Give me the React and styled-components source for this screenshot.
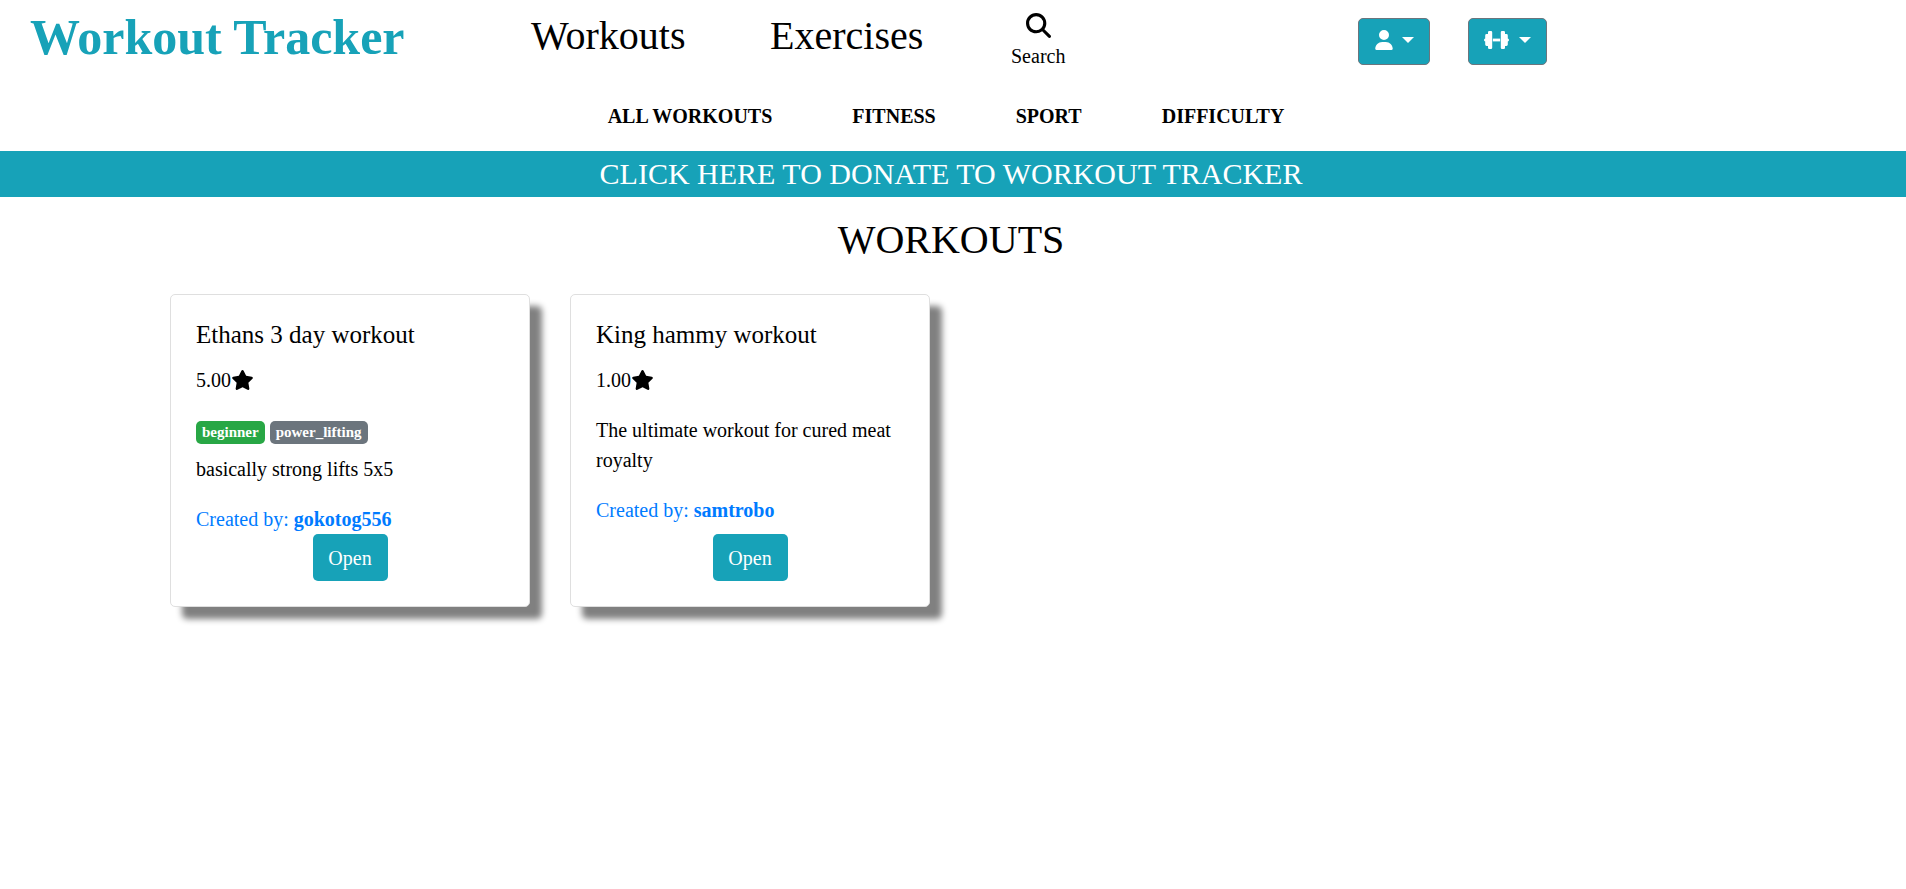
import React from "react";
import styled, { createGlobalStyle } from "styled-components";
import { FaMagnifyingGlass, FaUser, FaStar } from "react-icons/fa6";

const GlobalStyle = createGlobalStyle`
  *, *::before, *::after { box-sizing: border-box; }
  body {
    margin: 0;
    background: #fff;
    color: #000;
    font-family: "Liberation Serif", "Times New Roman", serif;
    font-size: 20px;
    line-height: 30px;
  }
  h1, h2, p { margin: 0; font-weight: 400; }
  a { color: inherit; text-decoration: none; }
  button { font: inherit; cursor: pointer; }
`;

const TopBar = styled.header`
  display: grid;
  grid-template-columns: 501fr 239fr 241fr 347fr 548fr;
  align-items: start;
  padding: 6px 0 0 30px;
`;

const Brand = styled.a`
  color: #17a2b8;
  font-size: 50px;
  font-weight: 700;
  line-height: 62px;
  white-space: nowrap;
`;

const MainLink = styled.a`
  font-size: 40px;
  line-height: 60px;
`;

const SearchLink = styled.a`
  display: flex;
  flex-direction: column;
  align-items: center;
  gap: 3px;
  justify-self: start;
  padding-top: 7px;

  svg { width: 25px; height: 25px; }
`;

const Actions = styled.div`
  display: flex;
  gap: 38px;
  padding-top: 12px;
`;

const DropdownButton = styled.button`
  display: flex;
  align-items: center;
  gap: ${({ $wide }) => ($wide ? "10px" : "8px")};
  height: 47px;
  padding: 0 15px 3px;
  border: 1px solid #6c757d;
  border-radius: 5px;
  background: #17a2b8;
  color: #fff;

  svg { height: 20px; width: ${({ $wide }) => ($wide ? "25px" : "20px")}; }

  &::after {
    content: "";
    border-top: 6px solid;
    border-left: 6px solid transparent;
    border-right: 6px solid transparent;
  }
`;

const SubNav = styled.nav`
  display: flex;
  justify-content: center;
  gap: 80px;
  padding: 30px 14px 20px 0;
  font-weight: 700;
`;

const DonateBanner = styled.a`
  display: block;
  padding-right: 4px;
  background: #17a2b8;
  color: #fff;
  font-size: 30px;
  line-height: 46px;
  text-align: center;
`;

const PageTitle = styled.h1`
  padding: 13px 4px 24px 0;
  font-size: 40px;
  line-height: 60px;
  text-align: center;
`;

const CardGrid = styled.main`
  display: grid;
  grid-template-columns: repeat(auto-fill, 360px);
  justify-content: center;
  gap: 40px;
  padding: 0 26px 40px 20px;
`;

const Card = styled.article`
  display: flex;
  flex-direction: column;
  align-items: flex-start;
  min-height: 313px;
  padding: 25px;
  border: 1px solid #dfdfdf;
  border-radius: 5px;
  background: #fff;
  box-shadow: 12px 12px 6px #808080;
`;

const CardTitle = styled.h2`
  margin-bottom: 15px;
  font-size: 25px;
`;

const Rating = styled.p`
  display: flex;
  align-items: center;
  margin-bottom: 20px;

  svg { width: 23px; height: 20px; }
`;

const Badges = styled.div`
  display: flex;
  gap: 5px;
  padding: 6px 0 10px;
`;

const Badge = styled.span`
  padding: 4px 6px;
  border-radius: 5px;
  background: ${({ $color }) => $color};
  color: #fff;
  font-size: 15px;
  font-weight: 700;
  line-height: 15px;
`;

const Description = styled.p`
  margin-bottom: 20px;
`;

const Author = styled.a`
  color: #007bff;
`;

const OpenButton = styled.button`
  align-self: center;
  min-width: 75px;
  height: 47px;
  margin-top: auto;
  padding: 0 15px;
  border: 0;
  border-radius: 5px;
  background: #17a2b8;
  color: #fff;
`;

const subLinks = ["ALL WORKOUTS", "FITNESS", "SPORT", "DIFFICULTY"];

const workouts = [
  {
    title: "Ethans 3 day workout",
    rating: "5.00",
    tags: [
      { label: "beginner", color: "#28a745" },
      { label: "power_lifting", color: "#6c757d" },
    ],
    description: "basically strong lifts 5x5",
    author: "gokotog556",
  },
  {
    title: "King hammy workout",
    rating: "1.00",
    tags: [],
    description: "The ultimate workout for cured meat royalty",
    author: "samtrobo",
  },
];

function DumbbellIcon() {
  return (
    <svg viewBox="0 0 25 20" fill="currentColor" aria-hidden="true">
      <path d="M5.2 1H7Q8.2 1 8.2 2.2V17.8Q8.2 19 7 19H5.2Q4 19 4 17.8V16H2.6Q1.2 16 1.2 14.6V11.4Q0 11.2 0 10T1.2 8.6V5.4Q1.2 4 2.6 4H4V2.2Q4 1 5.2 1Z" />
      <path d="M19.8 1H18Q16.8 1 16.8 2.2V17.8Q16.8 19 18 19H19.8Q21 19 21 17.8V16H22.4Q23.8 16 23.8 14.6V11.4Q25 11.2 25 10T23.8 8.6V5.4Q23.8 4 22.4 4H21V2.2Q21 1 19.8 1Z" />
      <path d="M8.8 8.6H16.2V11.4H8.8Z" />
    </svg>
  );
}

function WorkoutCard({ workout }) {
  return (
    <Card>
      <CardTitle>{workout.title}</CardTitle>
      <Rating>
        {workout.rating}
        <FaStar aria-hidden="true" />
      </Rating>
      {workout.tags.length > 0 && (
        <Badges>
          {workout.tags.map((tag) => (
            <Badge key={tag.label} $color={tag.color}>{tag.label}</Badge>
          ))}
        </Badges>
      )}
      <Description>{workout.description}</Description>
      <Author href="#author">
        Created by: <b>{workout.author}</b>
      </Author>
      <OpenButton type="button">Open</OpenButton>
    </Card>
  );
}

export default function App() {
  return (
    <>
      <GlobalStyle />
      <TopBar>
        <Brand href="#home">Workout Tracker</Brand>
        <MainLink href="#workouts">Workouts</MainLink>
        <MainLink href="#exercises">Exercises</MainLink>
        <SearchLink href="#search">
          <FaMagnifyingGlass aria-hidden="true" />
          Search
        </SearchLink>
        <Actions>
          <DropdownButton type="button" aria-label="Account">
            <FaUser />
          </DropdownButton>
          <DropdownButton type="button" aria-label="Training" $wide>
            <DumbbellIcon />
          </DropdownButton>
        </Actions>
      </TopBar>
      <SubNav>
        {subLinks.map((label) => (
          <a key={label} href="#filter">{label}</a>
        ))}
      </SubNav>
      <DonateBanner href="#donate">CLICK HERE TO DONATE TO WORKOUT TRACKER</DonateBanner>
      <PageTitle>WORKOUTS</PageTitle>
      <CardGrid>
        {workouts.map((workout) => (
          <WorkoutCard key={workout.title} workout={workout} />
        ))}
      </CardGrid>
    </>
  );
}
